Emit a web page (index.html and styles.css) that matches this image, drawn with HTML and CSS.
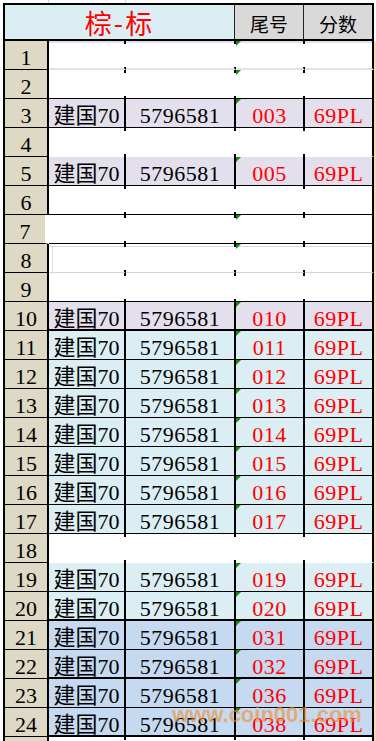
FILE: index.html
```html
<!DOCTYPE html>
<html lang="zh">
<head>
<meta charset="utf-8">
<title>棕-标</title>
<link rel="stylesheet" href="styles.css">
</head>
<body>
<div class="sheet">
  <div class="table">
    <div class="head">
      <div class="h-title">棕-标</div>
      <div class="h-cell h-d">尾号</div>
      <div class="h-cell h-e">分数</div>
    </div>

    <div class="row e r1 tri"><div class="rn">1</div><div class="c cb"></div><div class="c cc"></div><div class="c cd"></div><div class="c ce"></div></div>
    <div class="row e r2 tri"><div class="rn">2</div><div class="c cb"></div><div class="c cc"></div><div class="c cd"></div><div class="c ce"></div></div>
    <div class="row lav tri"><div class="rn">3</div><div class="c cb">建国70</div><div class="c cc">5796581</div><div class="c cd red">003</div><div class="c ce red">69PL</div></div>
    <div class="row e r4"><div class="rn">4</div><div class="c cb"></div><div class="c cc"></div><div class="c cd"></div><div class="c ce"></div></div>
    <div class="row lav tri"><div class="rn">5</div><div class="c cb">建国70</div><div class="c cc">5796581</div><div class="c cd red">005</div><div class="c ce red">69PL</div></div>
    <div class="row e r6"><div class="rn">6</div><div class="c cb"></div><div class="c cc"></div><div class="c cd"></div><div class="c ce"></div></div>
    <div class="row e r7 tri"><div class="rn">7</div><div class="c cb"></div><div class="c cc"></div><div class="c cd"></div><div class="c ce"></div></div>
    <div class="row e r8 tri"><div class="rn">8</div><div class="c cb"></div><div class="c cc"></div><div class="c cd"></div><div class="c ce"></div></div>
    <div class="row e r9"><div class="rn">9</div><div class="c cb"></div><div class="c cc"></div><div class="c cd"></div><div class="c ce"></div></div>
    <div class="row lav tri tb"><div class="rn">10</div><div class="c cb">建国70</div><div class="c cc">5796581</div><div class="c cd red">010</div><div class="c ce red">69PL</div></div>
    <div class="row sky tri"><div class="rn">11</div><div class="c cb">建国70</div><div class="c cc">5796581</div><div class="c cd red">011</div><div class="c ce red">69PL</div></div>
    <div class="row sky tri"><div class="rn">12</div><div class="c cb">建国70</div><div class="c cc">5796581</div><div class="c cd red">012</div><div class="c ce red">69PL</div></div>
    <div class="row sky tri"><div class="rn">13</div><div class="c cb">建国70</div><div class="c cc">5796581</div><div class="c cd red">013</div><div class="c ce red">69PL</div></div>
    <div class="row sky tri"><div class="rn">14</div><div class="c cb">建国70</div><div class="c cc">5796581</div><div class="c cd red">014</div><div class="c ce red">69PL</div></div>
    <div class="row sky tri"><div class="rn">15</div><div class="c cb">建国70</div><div class="c cc">5796581</div><div class="c cd red">015</div><div class="c ce red">69PL</div></div>
    <div class="row sky tri"><div class="rn">16</div><div class="c cb">建国70</div><div class="c cc">5796581</div><div class="c cd red">016</div><div class="c ce red">69PL</div></div>
    <div class="row sky tri"><div class="rn">17</div><div class="c cb">建国70</div><div class="c cc">5796581</div><div class="c cd red">017</div><div class="c ce red">69PL</div></div>
    <div class="row e r18"><div class="rn">18</div><div class="c cb"></div><div class="c cc"></div><div class="c cd"></div><div class="c ce"></div></div>
    <div class="row sky tri"><div class="rn">19</div><div class="c cb">建国70</div><div class="c cc">5796581</div><div class="c cd red">019</div><div class="c ce red">69PL</div></div>
    <div class="row sky tri tb"><div class="rn">20</div><div class="c cb">建国70</div><div class="c cc">5796581</div><div class="c cd red">020</div><div class="c ce red">69PL</div></div>
    <div class="row blue tri"><div class="rn">21</div><div class="c cb">建国70</div><div class="c cc">5796581</div><div class="c cd red">031</div><div class="c ce red">69PL</div></div>
    <div class="row blue tri tb"><div class="rn">22</div><div class="c cb">建国70</div><div class="c cc">5796581</div><div class="c cd red">032</div><div class="c ce red">69PL</div></div>
    <div class="row blue tri"><div class="rn">23</div><div class="c cb">建国70</div><div class="c cc">5796581</div><div class="c cd red">036</div><div class="c ce red">69PL</div></div>
    <div class="row blue tri tb"><div class="rn">24</div><div class="c cb">建国70</div><div class="c cc">5796581</div><div class="c cd red">038</div><div class="c ce red">69PL</div></div>
    <div class="row e r25"><div class="rn"></div><div class="c cb"></div><div class="c cc"></div><div class="c cd"></div><div class="c ce"></div></div>
  </div>
  <div class="strip"></div>
  <div class="watermark">www.coin001.com</div>
</div>
</body>
</html>
```

FILE: styles.css
```css
html, body {
  margin: 0;
  padding: 0;
  background: #fff;
}

body {
  font-family: "Liberation Serif", "Noto Sans CJK SC", serif;
  color: #000;
  width: 376px;
  height: 741px;
  overflow: hidden;
}

.sheet {
  position: relative;
  display: flex;
  padding: 3px 0 0 3px;
  background-image: linear-gradient(#d4d4d4, #d4d4d4), linear-gradient(#d4d4d4, #d4d4d4);
  background-size: 1px 3px, 1px 3px;
  background-position: 48px 0, 125px 0;
  background-repeat: no-repeat;
}

.table {
  width: 371px;
  border-left: 2px solid #000;
  box-sizing: border-box;
  flex: none;
}

.strip {
  flex: 1;
  margin-top: 38px;
  background: #fcd5b4;
  height: 720px;
}

/* header */
.head {
  display: flex;
  height: 38px;
  box-sizing: border-box;
  border-top: 2px solid #000;
  border-bottom: 2px solid #000;
}

.h-title {
  width: 230px;
  box-sizing: border-box;
  background: #daeef3;
  border-right: 1px solid #222;
  color: #ff0000;
  font-family: "Noto Sans CJK SC", sans-serif;
  font-size: 27px;
  letter-spacing: 2px;
  line-height: 34px;
  padding-top: 1px;
  text-align: center;
}

.h-cell {
  box-sizing: border-box;
  background: #d9d9d9;
  font-family: "Noto Sans CJK SC", sans-serif;
  font-size: 19px;
  line-height: 34px;
  padding-top: 2px;
  text-align: center;
}

.h-d {
  width: 69px;
  border-right: 1px solid #222;
}

.h-e {
  width: 70px;
  border-right: 2px solid #000;
}

/* rows */
.row {
  display: flex;
  height: 29px;
}

.rn {
  width: 44px;
  height: 29px;
  box-sizing: border-box;
  background: #ddd9c4;
  border-right: 2px solid #000;
  border-bottom: 1px solid #000;
  text-align: center;
  font-size: 22px;
  line-height: 34px;
  white-space: nowrap;
}

.c {
  position: relative;
  height: 29px;
  box-sizing: border-box;
  border-right: 2px solid #000;
  border-bottom: 1px solid #000;
  text-align: center;
  font-size: 22px;
  line-height: 34px;
  letter-spacing: 0.5px;
  white-space: nowrap;
}

.cb { width: 77px; letter-spacing: 0; }
.cc { width: 110px; }
.cd { width: 69px; }
.ce { width: 69px; }

.red { color: #ff0000; }

.tb .c { border-bottom-width: 2px; }

.lav .c { background: #e4dfec; }
.sky .c { background: #daeef3; }
.blue .c { background: #c5d9f1; }

/* green "number as text" marker */
.tri .cd::before {
  content: "";
  position: absolute;
  left: 0;
  top: 0;
  border-top: 5px solid #138a13;
  border-right: 5px solid transparent;
}

/* empty rows: white, only tick marks at column joins */
.e .c {
  background-color: #fff;
  background-image: linear-gradient(#000, #000), linear-gradient(#000, #000);
  background-size: 2px 3px, 2px 3px;
  background-position: right top, right bottom;
  background-repeat: no-repeat;
  background-origin: border-box;
  border-right-color: transparent;
  border-bottom-color: transparent;
}

.e .ce {
  background-image: none;
  border-right-color: #000;
}

.r1 .c {
  box-shadow: inset 0 2px 0 #e4dfec;
  border-bottom: 2px solid #e4dfec;
}

.r2 .c,
.r6 .c,
.r7 .c,
.r9 .c {
  border-bottom-color: #000;
}

.r7 .rn {
  border-right: 4px solid #fff;
}

.r8 .c {
  box-shadow: inset 0 2px 0 #fff, inset 0 3px 0 #dcd8e8;
  border-bottom-color: #d6d2e2;
}

.r8 .cb {
  box-shadow: inset 0 2px 0 #fff, inset 0 3px 0 #dcd8e8, inset 3px 0 0 #fff, inset 4px 0 0 #dcd8e8;
}

.r25 .rn {
  border-bottom: none;
}

.watermark {
  position: absolute;
  left: 172px;
  top: 704px;
  font-family: "Liberation Sans", sans-serif;
  font-weight: bold;
  font-size: 22px;
  line-height: 21px;
  color: rgba(240, 140, 40, 0.6);
  white-space: nowrap;
  pointer-events: none;
}
```
